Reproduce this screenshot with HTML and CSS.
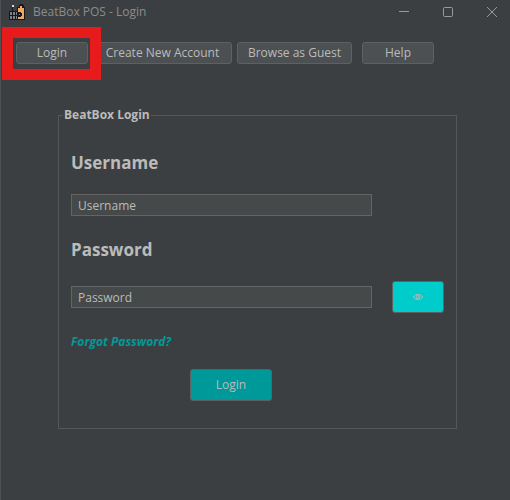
FILE: index.html
```html
<!DOCTYPE html>
<html lang="en">
<head>
<meta charset="utf-8">
<title>BeatBox POS - Login</title>
<link rel="stylesheet" href="styles.css">
</head>
<body>
<header class="titlebar">
  <svg class="logo" width="16" height="16" viewBox="0 0 16 16" shape-rendering="crispEdges" aria-hidden="true">
    <path fill="#15181d" d="M0 7h3V3h1v4h4V3h2V1h1V0h3v1h1v2h1v13H0z"/>
    <path fill="#f0a95c" d="M9 4h6v11H9z"/>
    <path fill="#f0a95c" d="M11 2h2v2h-2z"/>
    <path fill="#15181d" d="M9 8h3v1h1v3h-1v1H9z"/>
    <path fill="#b37c45" d="M10 10h1v1h-1z"/>
    <path fill="#7b808a" d="M1 8h2v3H1zM4 8h2v3H4zM7 8h1v3H7zM1 12h2v3H1zM4 12h2v3H4zM7 12h1v3H7z"/>
    <path fill="#d7d9dc" d="M3 1h2v2H3z"/>
  </svg>
  <h1 class="title">BeatBox POS - Login</h1>
  <div class="window-controls">
    <button type="button" class="window-button" aria-label="Minimize">
      <svg width="10" height="10" viewBox="0 0 10 10"><path d="M0 4.5h10"/></svg>
    </button>
    <button type="button" class="window-button" aria-label="Maximize">
      <svg width="10" height="10" viewBox="0 0 10 10"><rect x=".5" y=".5" width="9" height="9" rx="1"/></svg>
    </button>
    <button type="button" class="window-button" aria-label="Close">
      <svg width="10" height="10" viewBox="0 0 10 10"><path d="M0 0l10 10M10 0L0 10"/></svg>
    </button>
  </div>
</header>
<nav class="toolbar">
  <span class="highlighted"><button type="button" class="button">Login</button></span>
  <button type="button" class="button button-create">Create New Account</button>
  <button type="button" class="button button-browse">Browse as Guest</button>
  <button type="button" class="button button-help">Help</button>
</nav>
<main class="content">
  <form>
    <fieldset class="panel">
      <legend>BeatBox Login</legend>
      <label class="field-label" for="username">Username</label>
      <div class="field-row"><input class="field" id="username" type="text" value="Username"></div>
      <label class="field-label" for="password">Password</label>
      <div class="field-row password-row">
        <input class="field" id="password" type="text" value="Password">
        <button type="button" class="button reveal" aria-label="Show password">
          <svg width="12" height="8" viewBox="0 0 12 8" aria-hidden="true">
            <path d="M1 4Q6-1.500 11 4Q6 9.500 1 4z"/>
            <circle cx="6" cy="4" r="2"/>
            <path d="M5 5l2-2"/>
          </svg>
        </button>
      </div>
      <a class="forgot" href="#">Forgot Password?</a>
      <button type="submit" class="button submit">Login</button>
    </fieldset>
  </form>
</main>
</body>
</html>
```
FILE: styles.css
```css
* {
  box-sizing: border-box;
}

body {
  margin: 0;
  min-height: 100vh;
  border-left: 1px solid #4e5153;
  background: #3c3f41;
  color: #bbbbbb;
  font: 12px/16px "Open Sans", "Noto Sans", sans-serif;
}

button,
input {
  font: inherit;
  color: inherit;
}

.titlebar {
  display: flex;
  align-items: center;
  height: 24px;
  padding-left: 8px;
}

.logo {
  margin-right: 8px;
}

.title {
  margin: 0;
  color: #8c8c8c;
  font-size: 12px;
  font-weight: 400;
}

.window-controls {
  display: flex;
  margin-left: auto;
}

.window-button {
  display: grid;
  place-items: center;
  width: 44px;
  height: 24px;
  padding: 0;
  border: 0;
  background: none;
}

.window-button:last-child {
  width: 36px;
  margin-left: 4px;
}

.window-button svg {
  fill: none;
  stroke: #999999;
}

.toolbar {
  display: flex;
  gap: 5px;
  padding: 18px 15px 0;
}

.button {
  height: 22px;
  min-width: 72px;
  padding: 0;
  border: 1px solid #5e6162;
  border-radius: 3px;
  background: #4c5052;
}

.button-create {
  min-width: 139px;
}

.button-browse {
  min-width: 115px;
}

.button-help {
  margin-left: 5px;
}

.highlighted {
  position: relative;
  display: flex;
  z-index: 1;
}

/* Frame that calls out the active toolbar entry */
.highlighted::after {
  content: "";
  position: absolute;
  inset: -15px -13px -16px -14px;
  border: 11px solid #e71b1b;
  pointer-events: none;
}

.content {
  padding: 43px 53px 0 57px;
}

.panel {
  display: flex;
  flex-direction: column;
  min-width: 0;
  margin: 0;
  padding: 28px 12px 27px;
  border: 1px solid #555759;
}

.panel legend {
  margin-left: -8px;
  padding: 0 1px;
  font-weight: 700;
}

.field-label {
  align-self: flex-start;
  font-size: 17px;
  font-weight: 700;
  line-height: 24px;
}

.field-row {
  display: flex;
  align-items: center;
  gap: 20px;
  height: 32px;
  margin: 14px 0 17px;
}

.password-row {
  margin-top: 19px;
}

.field {
  flex: 0 1 301px;
  min-width: 0;
  height: 22px;
  padding: 0 6px;
  border: 1px solid #646464;
  border-radius: 0;
  background: #45494a;
}

.reveal {
  display: grid;
  place-items: center;
  min-width: 52px;
  height: 32px;
  background: #00cccc;
}

.reveal svg {
  fill: none;
  stroke: #a9b9b9;
}

.forgot {
  align-self: flex-start;
  margin-top: 4px;
  color: #009999;
  font-style: italic;
  font-weight: 700;
  text-decoration: none;
}

.submit {
  width: 82px;
  height: 32px;
  margin: 19px auto 0 119px;
  background: #009999;
}
```
